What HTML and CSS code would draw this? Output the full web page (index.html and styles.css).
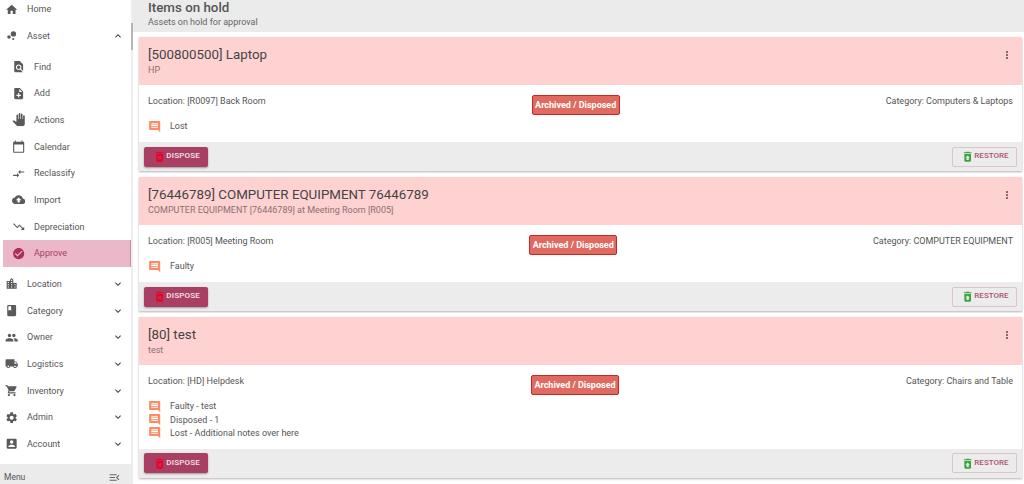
FILE: index.html
```html
<!DOCTYPE html>
<html lang="en">
<head>
    <meta charset="UTF-8">
    <meta name="viewport" content="width=device-width, initial-scale=1.0">
    <title>Items on hold</title>
    <link rel="stylesheet" href="styles.css">
</head>
<body>
    <svg class="icon-defs" width="0" height="0">
        <symbol id="i-home" viewBox="0 0 24 24"><path d="M10 20v-6h4v6h5v-8h3L12 3 2 12h3v8z"/></symbol>
        <symbol id="i-bubble" viewBox="0 0 24 24"><circle cx="7.2" cy="14.4" r="3.2"/><circle cx="14.8" cy="18" r="2"/><circle cx="15.2" cy="8.8" r="4.8"/></symbol>
        <symbol id="i-find" viewBox="0 0 24 24"><path d="M20 19.59V8l-6-6H6c-1.1 0-1.99.9-1.99 2L4 20c0 1.1.89 2 1.99 2H18c.45 0 .85-.15 1.19-.4l-4.43-4.43c-.8.52-1.74.83-2.76.83-2.76 0-5-2.24-5-5s2.24-5 5-5 5 2.24 5 5c0 1.02-.31 1.96-.83 2.75L20 19.59zM9 13c0 1.66 1.34 3 3 3s3-1.34 3-3-1.34-3-3-3-3 1.34-3 3z"/></symbol>
        <symbol id="i-add" viewBox="0 0 24 24"><path d="M14 2H6c-1.1 0-1.99.9-1.99 2L4 20c0 1.1.89 2 1.99 2H18c1.1 0 2-.9 2-2V8l-6-6zm2 14h-3v3h-2v-3H8v-2h3v-3h2v3h3v2zm-3-7V3.5L18.5 9H13z"/></symbol>
        <symbol id="i-pan" viewBox="0 0 24 24"><path d="M23 5.5V20c0 2.2-1.8 4-4 4h-7.3c-1.08 0-2.1-.43-2.85-1.19L1 14.83s1.26-1.23 1.3-1.25c.22-.19.49-.29.79-.29.22 0 .42.06.6.16.04.01 4.31 2.46 4.31 2.46V4c0-.83.67-1.5 1.5-1.5S11 3.17 11 4v7h1V1.5c0-.83.67-1.5 1.5-1.5S15 .67 15 1.5V11h1V2.5c0-.83.67-1.5 1.5-1.5s1.5.67 1.5 1.5V11h1V5.5c0-.83.67-1.5 1.5-1.5s1.5.67 1.5 1.5z"/></symbol>
        <symbol id="i-calendar" viewBox="0 0 24 24"><path d="M20 3h-1V1h-2v2H7V1H5v2H4c-1.1 0-2 .9-2 2v16c0 1.1.9 2 2 2h16c1.1 0 2-.9 2-2V5c0-1.1-.9-2-2-2zm0 18H4V8h16v13z"/></symbol>
        <symbol id="i-compare" viewBox="0 0 24 24"><path d="M9.01 14H2v2h7.01v3L13 15l-3.99-4v3zm5.98-1v-3H22V8h-7.01V5L11 9l3.99 4z"/></symbol>
        <symbol id="i-cloud" viewBox="0 0 24 24"><path d="M19.35 10.04C18.67 6.59 15.64 4 12 4 9.11 4 6.6 5.64 5.35 8.04 2.34 8.36 0 10.91 0 14c0 3.31 2.69 6 6 6h13c2.76 0 5-2.24 5-5 0-2.64-2.05-4.78-4.65-4.96zM14 13v4h-4v-4H7l5-5 5 5h-3z"/></symbol>
        <symbol id="i-trend" viewBox="0 0 24 24"><path d="M16 18l2.29-2.29-4.88-4.88-4 4L2 7.41 3.41 6l6 6 4-4 6.3 6.29L22 12v6z"/></symbol>
        <symbol id="i-check" viewBox="0 0 24 24"><path d="M12 2C6.48 2 2 6.48 2 12s4.48 10 10 10 10-4.48 10-10S17.52 2 12 2zm-2 15l-5-5 1.41-1.41L10 14.17l7.59-7.59L19 8l-9 9z"/></symbol>
        <symbol id="i-city" viewBox="0 0 24 24"><path d="M15 11V5l-3-3-3 3v2H3v14h18V11h-6zm-8 8H5v-2h2v2zm0-4H5v-2h2v2zm0-4H5V9h2v2zm6 8h-2v-2h2v2zm0-4h-2v-2h2v2zm0-4h-2V9h2v2zm0-4h-2V5h2v2zm6 12h-2v-2h2v2zm0-4h-2v-2h2v2z"/></symbol>
        <symbol id="i-book" viewBox="0 0 24 24"><path d="M18 2H6c-1.1 0-2 .9-2 2v16c0 1.1.9 2 2 2h12c1.1 0 2-.9 2-2V4c0-1.1-.9-2-2-2zM6 4h5v8l-2.5-1.5L6 12V4z"/></symbol>
        <symbol id="i-people" viewBox="0 0 24 24"><path d="M16 11c1.66 0 2.99-1.34 2.99-3S17.66 5 16 5c-1.66 0-3 1.34-3 3s1.34 3 3 3zm-8 0c1.66 0 2.99-1.34 2.99-3S9.66 5 8 5C6.34 5 5 6.34 5 8s1.34 3 3 3zm0 2c-2.33 0-7 1.17-7 3.5V19h14v-2.5c0-2.33-4.67-3.5-7-3.5zm8 0c-.29 0-.62.02-.97.05 1.16.84 1.97 1.97 1.97 3.45V19h6v-2.5c0-2.33-4.67-3.5-7-3.5z"/></symbol>
        <symbol id="i-truck" viewBox="0 0 24 24"><path d="M20 8h-3V4H3c-1.1 0-2 .9-2 2v11h2c0 1.66 1.34 3 3 3s3-1.34 3-3h6c0 1.66 1.34 3 3 3s3-1.34 3-3h2v-5l-3-4zM6 18.5c-.83 0-1.5-.67-1.5-1.5s.67-1.5 1.5-1.5 1.5.67 1.5 1.5-.67 1.5-1.5 1.5zm13.5-9l1.96 2.5H17V9.5h2.5zm-1.5 9c-.83 0-1.5-.67-1.5-1.5s.67-1.5 1.5-1.5 1.5.67 1.5 1.5-.67 1.5-1.5 1.5z"/></symbol>
        <symbol id="i-cart" viewBox="0 0 24 24"><path d="M7 18c-1.1 0-1.99.9-1.99 2S5.9 22 7 22s2-.9 2-2-.9-2-2-2zM1 2v2h2l3.6 7.59-1.35 2.45c-.16.28-.25.61-.25.96 0 1.1.9 2 2 2h12v-2H7.42c-.14 0-.25-.11-.25-.25l.03-.12.9-1.63h7.45c.75 0 1.41-.41 1.75-1.03l3.58-6.49c.08-.14.12-.31.12-.48 0-.55-.45-1-1-1H5.21l-.94-2H1zm16 16c-1.1 0-1.99.9-1.99 2s.89 2 1.99 2 2-.9 2-2-.9-2-2-2z"/></symbol>
        <symbol id="i-gear" viewBox="0 0 24 24"><path d="M19.14 12.94c.04-.3.06-.61.06-.94 0-.32-.02-.64-.07-.94l2.03-1.58c.18-.14.23-.41.12-.61l-1.92-3.32c-.12-.22-.37-.29-.59-.22l-2.39.96c-.5-.38-1.03-.7-1.62-.94l-.36-2.54c-.04-.24-.24-.41-.48-.41h-3.84c-.24 0-.43.17-.47.41l-.36 2.54c-.59.24-1.13.57-1.62.94l-2.39-.96c-.22-.08-.47 0-.59.22L2.74 8.87c-.12.21-.08.47.12.61l2.03 1.58c-.05.3-.09.63-.09.94s.02.64.07.94l-2.03 1.58c-.18.14-.23.41-.12.61l1.92 3.32c.12.22.37.29.59.22l2.39-.96c.5.38 1.03.7 1.62.94l.36 2.54c.05.24.24.41.48.41h3.84c.24 0 .44-.17.47-.41l.36-2.54c.59-.24 1.13-.56 1.62-.94l2.39.96c.22.08.47 0 .59-.22l1.92-3.32c.12-.22.07-.47-.12-.61l-2.01-1.58zM12 15.6c-1.98 0-3.6-1.62-3.6-3.6s1.62-3.6 3.6-3.6 3.6 1.62 3.6 3.6-1.62 3.6-3.6 3.6z"/></symbol>
        <symbol id="i-account" viewBox="0 0 24 24"><path d="M3 5v14c0 1.1.89 2 2 2h14c1.1 0 2-.9 2-2V5c0-1.1-.9-2-2-2H5c-1.11 0-2 .9-2 2zm12 4c0 1.66-1.34 3-3 3s-3-1.34-3-3 1.34-3 3-3 3 1.34 3 3zm-9 8c0-2 4-3.1 6-3.1s6 1.1 6 3.1v1H6v-1z"/></symbol>
        <symbol id="i-down" viewBox="0 0 24 24"><path d="M7.41 8.59L12 13.17l4.59-4.58L18 10l-6 6-6-6z"/></symbol>
        <symbol id="i-up" viewBox="0 0 24 24"><path d="M7.41 15.41L12 10.83l4.59 4.58L18 14l-6-6-6 6z"/></symbol>
        <symbol id="i-menu-open" viewBox="0 0 24 24"><path d="M3 18h13v-2H3v2zm0-5h10v-2H3v2zm0-7v2h13V6H3zm18 9.59L17.42 12 21 8.41 19.59 7l-5 5 5 5L21 15.59z"/></symbol>
        <symbol id="i-more" viewBox="0 0 24 24"><path d="M12 8c1.1 0 2-.9 2-2s-.9-2-2-2-2 .9-2 2 .9 2 2 2zm0 2c-1.1 0-2 .9-2 2s.9 2 2 2 2-.9 2-2-.9-2-2-2zm0 6c-1.1 0-2 .9-2 2s.9 2 2 2 2-.9 2-2-.9-2-2-2z"/></symbol>
        <symbol id="i-note" viewBox="0 0 24 24"><path d="M21.99 4c0-1.1-.89-2-1.99-2H4c-1.1 0-2 .9-2 2v12c0 1.1.9 2 2 2h14l4 4-.01-18zM18 14H6v-2h12v2zm0-3H6V9h12v2zm0-3H6V6h12v2z"/></symbol>
        <symbol id="i-dispose" viewBox="0 0 24 24"><path d="M6 19c0 1.1.9 2 2 2h8c1.1 0 2-.9 2-2V7H6v12zm2.46-7.12l1.41-1.41L12 12.59l2.12-2.12 1.41 1.41L13.41 14l2.12 2.12-1.41 1.41L12 15.41l-2.12 2.12-1.41-1.41L10.59 14l-2.13-2.12zM15.5 4l-1-1h-5l-1 1H5v2h14V4z"/></symbol>
        <symbol id="i-restore" viewBox="0 0 24 24"><path d="M19 4h-3.5l-1-1h-5l-1 1H5v2h14zM6 7v12c0 1.1.9 2 2 2h8c1.1 0 2-.9 2-2V7H6zm8 7v4h-4v-4H8l4-4 4 4h-2z"/></symbol>
    </svg>

    <div class="app">
        <!-- Side menu -->
        <aside class="sidebar">
            <nav class="menu">
                <a class="menu-item"><svg class="menu-icon"><use href="#i-home"/></svg><span>Home</span></a>
                <a class="menu-item"><svg class="menu-icon"><use href="#i-bubble"/></svg><span>Asset</span><svg class="chevron"><use href="#i-up"/></svg></a>
                <div class="submenu">
                    <a class="menu-item"><svg class="menu-icon"><use href="#i-find"/></svg><span>Find</span></a>
                    <a class="menu-item"><svg class="menu-icon"><use href="#i-add"/></svg><span>Add</span></a>
                    <a class="menu-item"><svg class="menu-icon"><use href="#i-pan"/></svg><span>Actions</span></a>
                    <a class="menu-item"><svg class="menu-icon"><use href="#i-calendar"/></svg><span>Calendar</span></a>
                    <a class="menu-item"><svg class="menu-icon"><use href="#i-compare"/></svg><span>Reclassify</span></a>
                    <a class="menu-item"><svg class="menu-icon"><use href="#i-cloud"/></svg><span>Import</span></a>
                    <a class="menu-item"><svg class="menu-icon"><use href="#i-trend"/></svg><span>Depreciation</span></a>
                    <a class="menu-item active"><svg class="menu-icon"><use href="#i-check"/></svg><span>Approve</span></a>
                </div>
                <a class="menu-item"><svg class="menu-icon"><use href="#i-city"/></svg><span>Location</span><svg class="chevron"><use href="#i-down"/></svg></a>
                <a class="menu-item"><svg class="menu-icon"><use href="#i-book"/></svg><span>Category</span><svg class="chevron"><use href="#i-down"/></svg></a>
                <a class="menu-item"><svg class="menu-icon"><use href="#i-people"/></svg><span>Owner</span><svg class="chevron"><use href="#i-down"/></svg></a>
                <a class="menu-item"><svg class="menu-icon"><use href="#i-truck"/></svg><span>Logistics</span><svg class="chevron"><use href="#i-down"/></svg></a>
                <a class="menu-item"><svg class="menu-icon"><use href="#i-cart"/></svg><span>Inventory</span><svg class="chevron"><use href="#i-down"/></svg></a>
                <a class="menu-item"><svg class="menu-icon"><use href="#i-gear"/></svg><span>Admin</span><svg class="chevron"><use href="#i-down"/></svg></a>
                <a class="menu-item"><svg class="menu-icon"><use href="#i-account"/></svg><span>Account</span><svg class="chevron"><use href="#i-down"/></svg></a>
            </nav>
            <div class="scroll-thumb"></div>
            <div class="menu-footer">
                <span>Menu</span>
                <svg class="menu-toggle"><use href="#i-menu-open"/></svg>
            </div>
        </aside>

        <main class="content">
            <header class="page-head">
                <h1>Items on hold</h1>
                <p>Assets on hold for approval</p>
            </header>

            <section class="card">
                <div class="card-head">
                    <div>
                        <h2>[500800500] Laptop</h2>
                        <p>HP</p>
                    </div>
                    <svg class="more"><use href="#i-more"/></svg>
                </div>
                <div class="card-body">
                    <div class="info-row">
                        <span>Location: [R0097] Back Room</span>
                        <span class="badge">Archived / Disposed</span>
                        <span>Category: Computers &amp; Laptops</span>
                    </div>
                    <ul class="notes">
                        <li><svg class="note-icon"><use href="#i-note"/></svg>Lost</li>
                    </ul>
                </div>
                <div class="card-foot">
                    <button class="btn-dispose"><svg><use href="#i-dispose"/></svg>DISPOSE</button>
                    <button class="btn-restore"><svg><use href="#i-restore"/></svg>RESTORE</button>
                </div>
            </section>

            <section class="card">
                <div class="card-head">
                    <div>
                        <h2>[76446789] COMPUTER EQUIPMENT 76446789</h2>
                        <p>COMPUTER EQUIPMENT [76446789] at Meeting Room [R005]</p>
                    </div>
                    <svg class="more"><use href="#i-more"/></svg>
                </div>
                <div class="card-body">
                    <div class="info-row">
                        <span>Location: [R005] Meeting Room</span>
                        <span class="badge">Archived / Disposed</span>
                        <span>Category: COMPUTER EQUIPMENT</span>
                    </div>
                    <ul class="notes">
                        <li><svg class="note-icon"><use href="#i-note"/></svg>Faulty</li>
                    </ul>
                </div>
                <div class="card-foot">
                    <button class="btn-dispose"><svg><use href="#i-dispose"/></svg>DISPOSE</button>
                    <button class="btn-restore"><svg><use href="#i-restore"/></svg>RESTORE</button>
                </div>
            </section>

            <section class="card">
                <div class="card-head">
                    <div>
                        <h2>[80] test</h2>
                        <p>test</p>
                    </div>
                    <svg class="more"><use href="#i-more"/></svg>
                </div>
                <div class="card-body">
                    <div class="info-row">
                        <span>Location: [HD] Helpdesk</span>
                        <span class="badge">Archived / Disposed</span>
                        <span>Category: Chairs and Table</span>
                    </div>
                    <ul class="notes">
                        <li><svg class="note-icon"><use href="#i-note"/></svg>Faulty - test</li>
                        <li><svg class="note-icon"><use href="#i-note"/></svg>Disposed - 1</li>
                        <li><svg class="note-icon"><use href="#i-note"/></svg>Lost - Additional notes over here</li>
                    </ul>
                </div>
                <div class="card-foot">
                    <button class="btn-dispose"><svg><use href="#i-dispose"/></svg>DISPOSE</button>
                    <button class="btn-restore"><svg><use href="#i-restore"/></svg>RESTORE</button>
                </div>
            </section>
        </main>
    </div>
</body>
</html>
```

FILE: styles.css
```css
html, body {
    margin: 0;
    height: 100%;
    overflow: hidden;
}
body {
    font-family: Roboto, "Liberation Sans", sans-serif;
    font-size: 9px;
    color: #555;
    background: #fff;
}
.icon-defs {
    display: none;
}
.app {
    display: flex;
    height: 484px;
}

/* Side menu */
.sidebar {
    position: relative;
    width: 133px;
    flex: none;
    display: flex;
    flex-direction: column;
}
.menu {
    flex: 1;
    min-height: 0;
    overflow: hidden;
    margin-top: -4px;
    border-right: 2px solid #eeeeee;
}
.scroll-thumb {
    position: absolute;
    top: 23px;
    right: 0;
    width: 2px;
    height: 27px;
    background: #b5b5b5;
}
.menu-item {
    display: flex;
    align-items: center;
    height: 26.67px;
    padding-left: 5px;
    color: #555;
}
.menu-icon {
    width: 13.33px;
    height: 13.33px;
    margin-right: 8.67px;
    fill: #5a5a5a;
    flex: none;
}
.chevron {
    width: 12px;
    height: 12px;
    margin-left: auto;
    margin-right: 7px;
    fill: #444;
}
.submenu {
    padding: 4px 0 4px 3px;
}
.submenu .menu-item {
    padding-left: 9px;
}
.menu-item.active {
    background: #eab8c8;
    color: #a8406a;
    border-right: 1px solid #c98aa3;
}
.menu-item.active .menu-icon {
    fill: #a8305c;
}
.menu-footer {
    height: 20px;
    flex: none;
    display: flex;
    align-items: center;
    justify-content: space-between;
    padding: 6px 12px 0 4px;
    box-sizing: border-box;
    background: #ebebeb;
    font-size: 8.5px;
}
.menu-toggle {
    width: 13px;
    height: 13px;
    fill: #666;
}

/* Main column */
.content {
    flex: 1;
    min-width: 0;
}
.page-head {
    height: 32px;
    box-sizing: border-box;
    padding: 0 15px;
    background: #ebebeb;
}
.page-head h1 {
    margin: 0;
    font-size: 13.33px;
    line-height: 16px;
    font-weight: 500;
    color: #555;
}
.page-head p {
    margin: 0;
    font-size: 9px;
    line-height: 12px;
    color: #666;
}
.card {
    margin: 5px 2px 6px 6px;
    box-shadow: 0 1px 2px rgba(0, 0, 0, 0.3);
}
.card-head {
    height: 48px;
    box-sizing: border-box;
    padding: 9px 9px 0 9px;
    background: #ffd2d2;
    display: flex;
    justify-content: space-between;
}
.card-head h2 {
    margin: 0;
    font-size: 13.33px;
    line-height: 17px;
    font-weight: 400;
    color: #444;
}
.card-head p {
    margin: 2px 0 0;
    font-size: 9px;
    line-height: 11px;
    color: #8a7070;
}
.more {
    width: 12px;
    height: 12px;
    margin-top: 3px;
    fill: #6a5555;
}
.card-body {
    padding: 11px 9px 9px 9px;
    background: #fff;
}
.info-row {
    display: flex;
    justify-content: space-between;
    align-items: flex-start;
    height: 23.67px;
    line-height: 11px;
}
.badge {
    box-sizing: border-box;
    height: 20px;
    margin-top: -1px;
    line-height: 18px;
    padding: 0 2.5px;
    border: 1px solid #c62828;
    border-radius: 2px;
    background: #e06a60;
    color: #fff;
    font-weight: 700;
}
.notes {
    list-style: none;
    margin: 0;
    padding: 0;
}
.notes li {
    display: flex;
    align-items: center;
    height: 13.33px;
}
.note-icon {
    width: 13.33px;
    height: 13.33px;
    margin-right: 8.67px;
    fill: #ff8a65;
    flex: none;
}
.card-foot {
    height: 29px;
    box-sizing: border-box;
    padding: 4.6px 5px 4px;
    background: #ececec;
    display: flex;
    justify-content: space-between;
    align-items: flex-start;
}
button {
    display: flex;
    align-items: center;
    box-sizing: border-box;
    height: 20px;
    padding: 0 0 2px;
    border-radius: 2px;
    font-family: inherit;
    font-size: 8px;
    font-weight: 500;
    letter-spacing: 0.2px;
    white-space: nowrap;
}
button svg {
    width: 13.33px;
    height: 13.33px;
    margin-top: 2px;
    flex: none;
}
.btn-dispose {
    width: 64px;
    padding-left: 9px;
    border: none;
    background: #a94064;
    color: #f8e6ec;
    box-shadow: 0 1px 2px rgba(0, 0, 0, 0.35);
}
.btn-dispose svg {
    fill: #ee0022;
}
.btn-restore {
    width: 65px;
    padding-left: 7.5px;
    border: 1px solid #dcc3cd;
    background: #ececec;
    color: #ac5272;
    letter-spacing: 0;
}
.btn-restore svg {
    margin-right: 0.5px;
    fill: #3aa63a;
}
```
